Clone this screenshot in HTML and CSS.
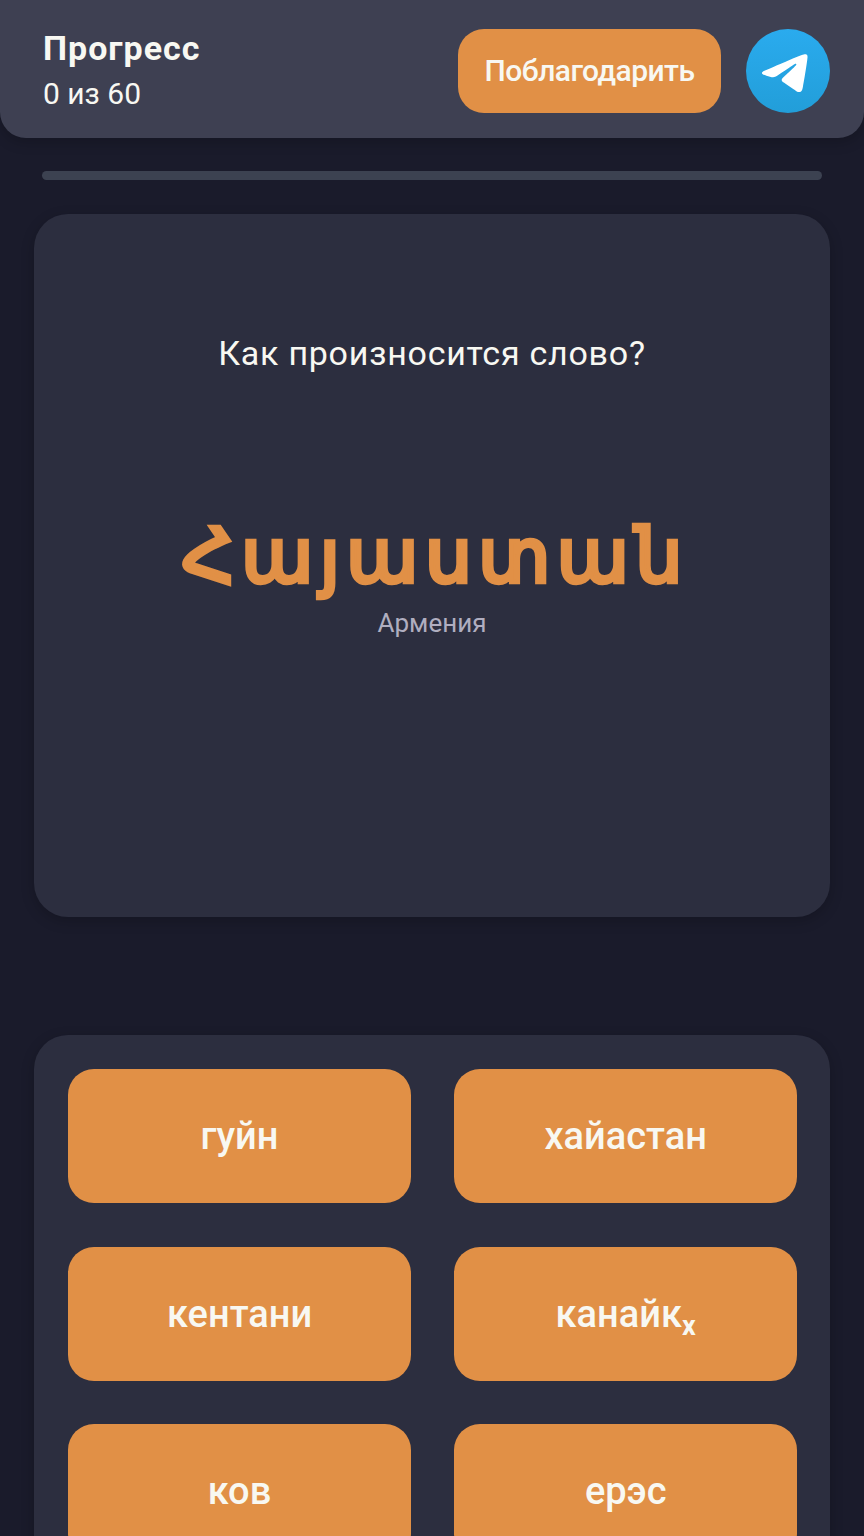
FILE: index.html
```html
<!DOCTYPE html>
<html lang="ru">
<head>
<meta charset="utf-8">
<title>Прогресс</title>
<link rel="stylesheet" href="styles.css">
</head>
<body>
<header class="header">
  <div class="progress-info">
    <div class="title">Прогресс</div>
    <div class="count">0 из 60</div>
  </div>
  <div class="actions">
    <button class="thanks">Поблагодарить</button>
    <a class="telegram" aria-label="Telegram">
      <svg viewBox="0 0 240 240" width="84" height="84">
        <defs><linearGradient id="tg" x1="0" y1="0" x2="0" y2="1"><stop offset="0" stop-color="#2aabee"/><stop offset="1" stop-color="#229ed9"/></linearGradient></defs>
        <circle cx="120" cy="120" r="120" fill="url(#tg)"/>
        <path fill="#fff" d="M54.300 118.800c35-15.200 58.300-25.300 70-30.200 33.300-13.900 40.300-16.300 44.800-16.400 1 0 3.200.200 4.700 1.400 1.200 1 1.500 2.300 1.700 3.300s.400 3.100.200 4.700c-1.800 19-9.600 65.100-13.600 86.300-1.700 9-5 12-8.200 12.300-7 .600-12.300-4.600-19-9-10.600-6.900-16.500-11.200-26.800-18-11.900-7.800-4.200-12.100 2.600-19.100 1.800-1.800 32.500-29.800 33.100-32.300.100-.300.100-1.500-.600-2.100-.700-.600-1.700-.400-2.500-.200-1.100.200-17.900 11.400-50.600 33.500-4.800 3.300-9.100 4.900-13 4.800-4.300-.100-12.500-2.400-18.700-4.400-7.500-2.400-13.500-3.700-13-7.900.300-2.200 3.300-4.400 8.900-6.700z"/>
      </svg>
    </a>
  </div>
</header>
<main class="content">
  <div class="bar"></div>
  <section class="card">
    <p class="question">Как произносится слово?</p>
    <div class="word">Հայաստան</div>
    <div class="translation">Армения</div>
  </section>
  <section class="answers">
    <button class="answer">гуйн</button>
    <button class="answer">хайастан</button>
    <button class="answer">кентани</button>
    <button class="answer">канайк<sub>х</sub></button>
    <button class="answer">ков</button>
    <button class="answer">ерэс</button>
  </section>
</main>
</body>
</html>
```
FILE: styles.css
```css
* { box-sizing: border-box; }
body { margin: 0; height: 1536px; overflow: hidden; background: #1a1b2b; color: #f8f8f2; font-family: Roboto, "Noto Sans", sans-serif; }
button { border: 0; padding: 0; margin: 0; background: #e19046; color: #f8f8f2; font-family: inherit; font-weight: 500; }
.header { height: 138px; padding: 28px 34px 25px 43px; display: flex; justify-content: space-between; background: #3e4052; border-radius: 0 0 26px 26px; box-shadow: 0 4px 14px rgba(0,0,0,.2); }
.title { font-size: 34px; line-height: 40px; font-weight: 700; letter-spacing: 1px; }
.count { margin-top: 6px; font-size: 30px; line-height: 40px; }
.actions { display: flex; gap: 25px; padding-top: 1px; }
.thanks { width: 263px; height: 84px; padding-bottom: 2px; border-radius: 26px; font-size: 30px; letter-spacing: -.55px; }
.telegram { width: 84px; height: 84px; }
.telegram svg { display: block; }
.content { padding: 33px 34px 0; }
.bar { height: 9px; margin: 0 8px; border-radius: 5px; background: #3c4251; }
.card { height: 703px; margin-top: 34px; padding-top: 117px; background: #2c2e3f; border-radius: 34px; text-align: center; box-shadow: 0 4px 14px rgba(0,0,0,.2); }
.question { margin: 0; font-size: 34px; line-height: 44px; letter-spacing: .75px; }
.word { margin-top: 126px; height: 106px; font-family: "DejaVu Sans", sans-serif; font-weight: 400; font-size: 74px; line-height: 110px; letter-spacing: 6.500px; text-indent: 6.500px; color: #e19046; -webkit-text-stroke: 4.500px #e19046; }
.translation { font-size: 26px; line-height: 32px; color: #b0aec0; }
.answers { margin-top: 118px; padding: 34px; display: grid; grid-template-columns: 343px 343px; gap: 43.200px; background: #2c2e3f; border-radius: 34px; box-shadow: 0 4px 14px rgba(0,0,0,.2); }
.answer { height: 134.400px; border-radius: 26px; font-size: 38px; }
.answer sub { font-size: 27px; font-weight: 700; line-height: 0; vertical-align: -8px; }
```
